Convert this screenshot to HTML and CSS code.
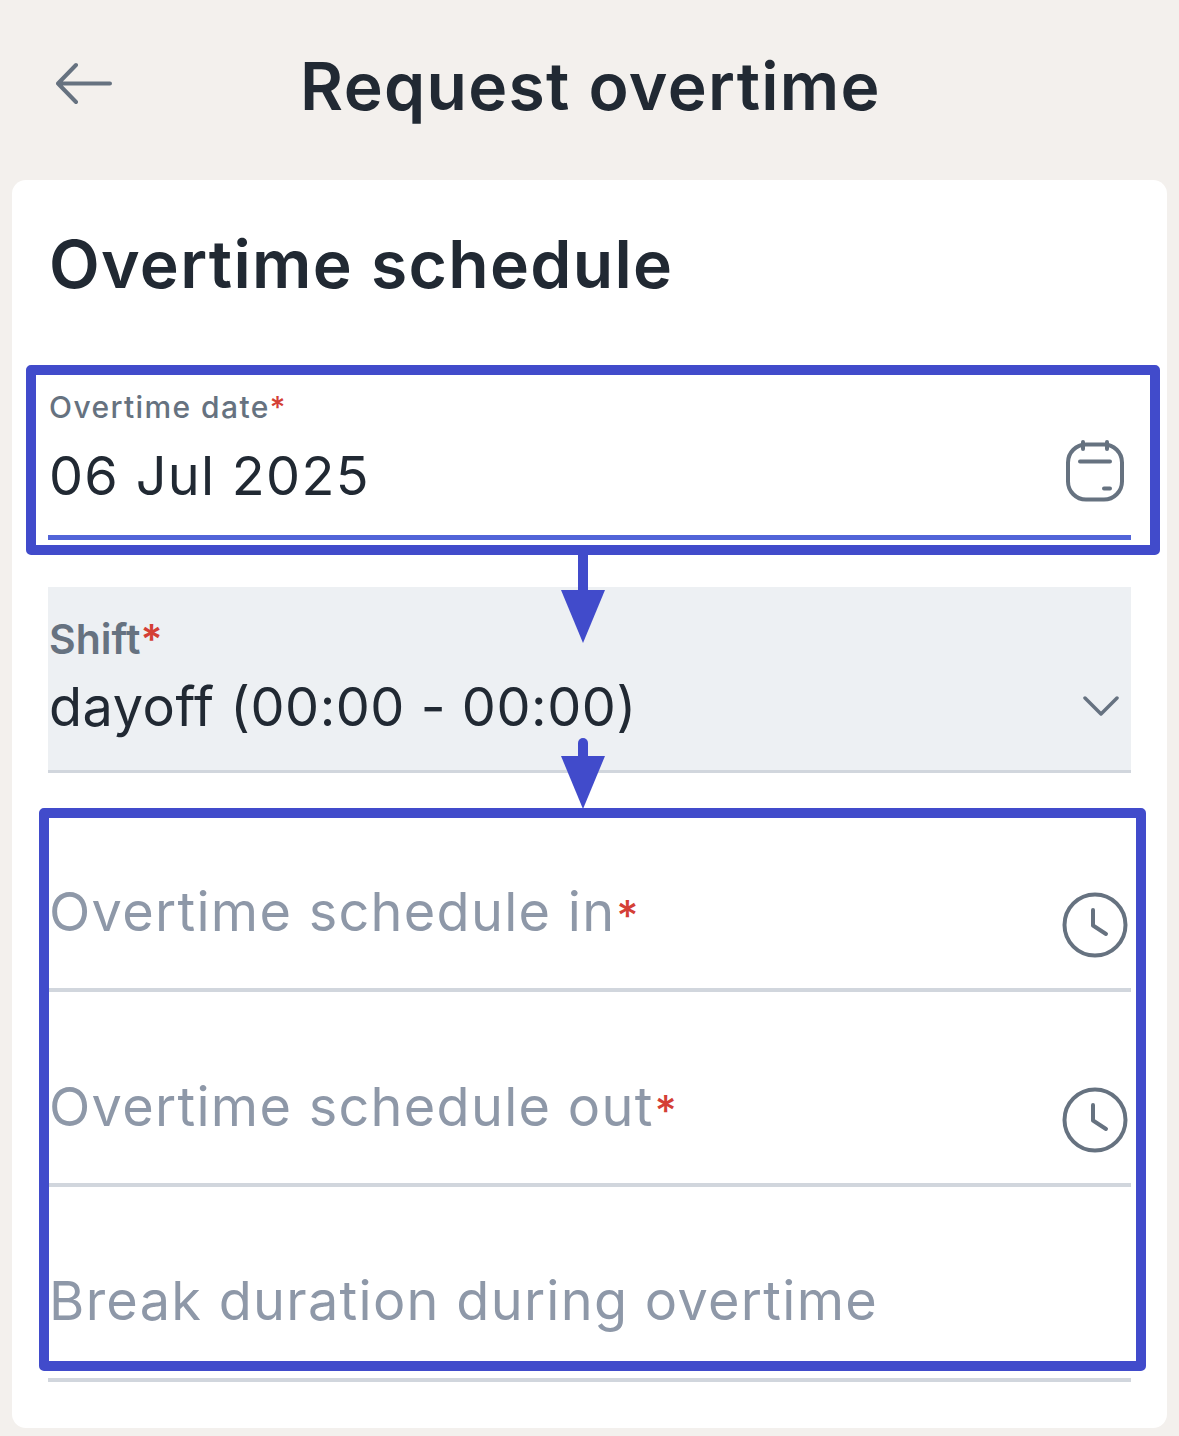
FILE: index.html
```html
<!DOCTYPE html>
<html lang="en">
<head>
<meta charset="utf-8">
<title>Request overtime</title>
<link rel="stylesheet" href="styles.css">
</head>
<body>
<header class="topbar">
  <svg class="back-icon" width="60" height="46" viewBox="0 0 60 46" fill="none" stroke="#667280" stroke-width="4" stroke-linecap="round" stroke-linejoin="round"><path d="M20 4 L2 22.5 L20 41 M2 22.5 H54"/></svg>
  <h1 class="page-title">Request overtime</h1>
</header>
<main class="card">
  <h2 class="section-title">Overtime schedule</h2>
  <div class="fields">
    <div class="field field-active">
      <div class="field-body">
        <div class="label">Overtime date<span class="req">*</span></div>
        <div class="value">06 Jul 2025</div>
      </div>
      <svg class="calendar-icon" width="60" height="62" viewBox="0 0 60 62" fill="none" stroke="#667280" stroke-width="4" stroke-linecap="round"><rect x="3" y="4.5" width="54" height="55" rx="18"/><path d="M18 2V9M42 2V9M15 21.5H45M39 48.5H45"/></svg>
    </div>
    <div class="field field-select">
      <div class="field-body">
        <div class="label label-large">Shift<span class="req">*</span></div>
        <div class="value">dayoff (00:00 - 00:00)</div>
      </div>
      <svg class="chevron-icon" width="36" height="22" viewBox="0 0 36 22" fill="none" stroke="#667280" stroke-width="3.5" stroke-linecap="round" stroke-linejoin="round"><path d="M2 3 L18 19 L34 3"/></svg>
    </div>
    <div class="field field-empty">
      <div class="placeholder">Overtime schedule in<span class="req req-small">*</span></div>
      <svg class="clock-icon" width="66" height="66" viewBox="0 0 66 66" fill="none" stroke="#667280" stroke-width="4" stroke-linecap="round" stroke-linejoin="round"><circle cx="33" cy="33" r="30.5"/><path d="M31 18V33.5L44 42"/></svg>
    </div>
    <div class="field field-empty">
      <div class="placeholder">Overtime schedule out<span class="req req-small">*</span></div>
      <svg class="clock-icon" width="66" height="66" viewBox="0 0 66 66" fill="none" stroke="#667280" stroke-width="4" stroke-linecap="round" stroke-linejoin="round"><circle cx="33" cy="33" r="30.5"/><path d="M31 18V33.5L44 42"/></svg>
    </div>
    <div class="field field-empty field-last">
      <div class="placeholder">Break duration during overtime</div>
    </div>
  </div>
</main>
<div class="note-box note-box-top"></div>
<div class="note-box note-box-bottom"></div>
<svg class="note-arrow note-arrow-top" width="46" height="90" viewBox="0 0 46 90"><rect x="18" y="0" width="10" height="40" fill="#414bcb"/><path d="M1 36H45L23 89Z" fill="#414bcb"/></svg>
<svg class="note-arrow note-arrow-bottom" width="46" height="72" viewBox="0 0 46 72"><rect x="18" y="0" width="10" height="30" rx="5" fill="#414bcb"/><path d="M1 18H45L23 71Z" fill="#414bcb"/></svg>
</body>
</html>
```
FILE: styles.css
```css
* { box-sizing: border-box; }
html, body { margin: 0; padding: 0; }
body {
  position: relative;
  width: 1179px;
  height: 1436px;
  overflow: hidden;
  background: #f3f0ed;
  font-family: Inter, "Noto Sans", sans-serif;
  color: #212933;
}
.topbar {
  height: 180px;
  display: flex;
  align-items: center;
  justify-content: center;
  position: relative;
}
.back-icon { position: absolute; left: 56px; top: 61px; }
.page-title {
  margin: 0 0 -1px;
  font-size: 66px;
  line-height: 1;
  font-weight: 600;
  letter-spacing: 1.3px;
  position: relative;
  top: -5px;
  left: 1px;
}
.card {
  margin: 0 12px;
  height: 1248px;
  background: #fff;
  border-radius: 14px;
  padding: 48px 36px 0;
}
.section-title {
  margin: 0;
  height: 72px;
  font-size: 66px;
  line-height: 72px;
  font-weight: 600;
  letter-spacing: 1.3px;
  margin-left: 1px;
}
.fields { display: flex; flex-direction: column; }
.field {
  display: flex;
  justify-content: space-between;
  position: relative;
}
.field-active {
  height: 240px;
  padding-top: 89px;
  border-bottom: 5px solid #5264d8;
}
.field-select {
  margin-top: 47px;
  height: 186px;
  padding-top: 32px;
  background: #edf0f3;
  border-bottom: 3px solid #d1d6dd;
}
.field-empty {
  height: 195px;
  border-bottom: 4px solid #d1d6dd;
  align-items: flex-start;
}
.field-select + .field-empty {
  height: 219px;
}
.field-body { padding-left: 1px; }
.label {
  font-size: 30px;
  line-height: 36px;
  font-weight: 500;
  color: #667280;
  letter-spacing: 1.4px;
}
.label-large {
  font-size: 41px;
  line-height: 40px;
  font-weight: 600;
  letter-spacing: 0;
}
.req { color: #d43f36; }
.req-small { font-size: 42px; letter-spacing: 0; margin-left: 1px; font-weight: 500; }
.value {
  font-size: 54px;
  line-height: 64px;
  letter-spacing: 1.3px;
  margin-top: 19px;
}
.label-large + .value {
  margin-top: 16px;
  letter-spacing: 0.55px;
}
.placeholder {
  font-size: 54px;
  line-height: 64px;
  color: #8e98a8;
  letter-spacing: 1.3px;
  margin-left: 1px;
  margin-top: 83px;
}
.field-select + .field-empty .placeholder { margin-top: 107px; }
.field-last .placeholder { margin-top: 82px; }
.calendar-icon { position: absolute; right: 6px; top: 140px; }
.chevron-icon { position: absolute; right: 12px; top: 108px; }
.clock-icon { position: absolute; right: 3px; top: 95px; }
.field-select + .field-empty .clock-icon { top: 119px; }
.note-box {
  position: absolute;
  border: 10px solid #414bcb;
  border-radius: 5px;
}
.note-box-top { left: 26px; top: 365px; width: 1134px; height: 190px; }
.note-box-bottom { left: 39px; top: 808px; width: 1107px; height: 563px; }
.note-arrow { position: absolute; }
.note-arrow-top { left: 560px; top: 554px; }
.note-arrow-bottom { left: 560px; top: 738px; }
```
